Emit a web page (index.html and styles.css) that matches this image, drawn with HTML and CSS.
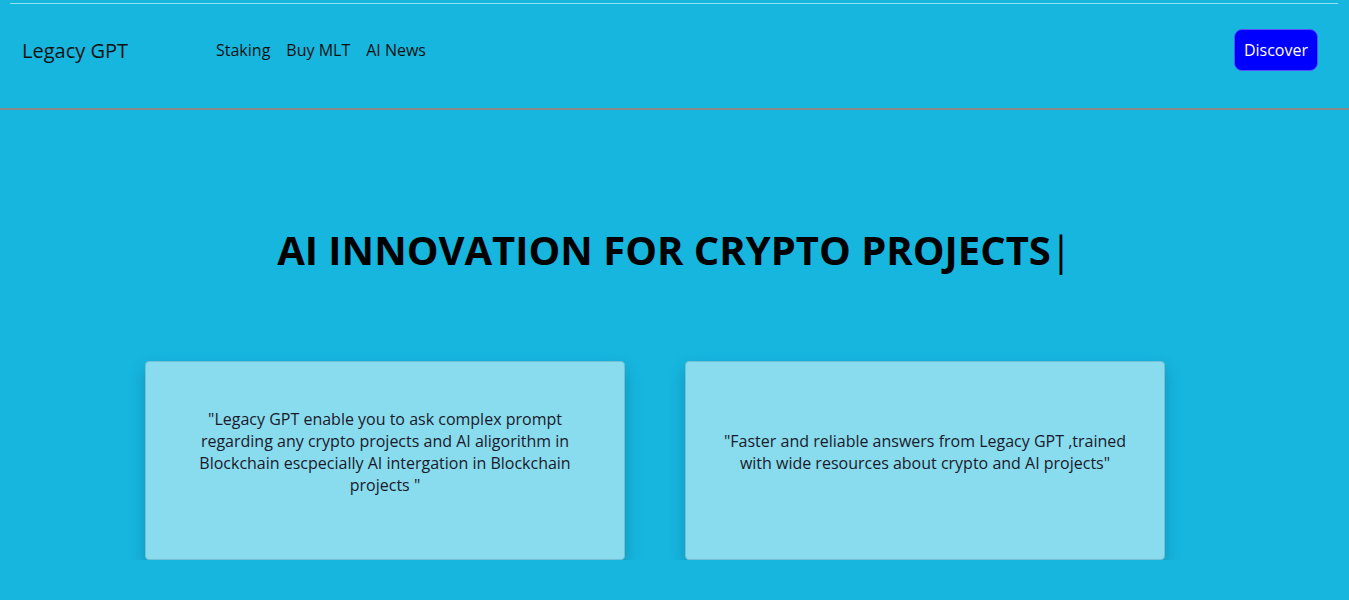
FILE: index.html
```html
<!DOCTYPE html>
<html>
<head>
<meta charset="utf-8">
<link rel="stylesheet" href="styles.css">
</head>
<body>
<header class="header">
  <div class="topline"></div>
  <nav class="nav">
    <div class="brand">Legacy GPT</div>
    <div class="links">
      <a href="#">Staking</a>
      <a href="#">Buy MLT</a>
      <a href="#">AI News</a>
    </div>
    <button class="discover">Discover</button>
  </nav>
</header>
<main class="main">
  <h1 class="title">AI INNOVATION FOR CRYPTO PROJECTS<span class="cursor">|</span></h1>
  <section class="cards">
    <div class="card"><p>"Legacy GPT enable you to ask complex prompt regarding any crypto projects and AI aligorithm in Blockchain escpecially AI intergation in Blockchain projects "</p></div>
    <div class="card"><p>"Faster and reliable answers from Legacy GPT ,trained with wide resources about crypto and AI projects"</p></div>
  </section>
</main>
</body>
</html>
```
FILE: styles.css
```css
html, body {
  margin: 0;
  padding: 0;
  background: #16b6df;
  font-family: "Open Sans", "Noto Sans", sans-serif;
  color: #111;
  overflow: hidden;
}
.header {
  border-bottom: 2px solid #8a8a8a;
  height: 107px;
  box-sizing: border-box;
}
.topline {
  margin: 3px 11px 0 10px;
  height: 1px;
  background: #8fe2f3;
}
.nav {
  display: flex;
  align-items: center;
  height: 92px;
  padding: 0 31px 0 22px;
}
.brand {
  font-size: 20px;
  width: 194px;
}
.links {
  display: flex;
  gap: 16px;
  flex: 1;
}
.links a {
  color: #111;
  text-decoration: none;
  font-size: 16px;
}
.discover {
  background: #0000ff;
  color: #fff;
  border: 1px solid #5a4fff;
  border-radius: 8px;
  font-family: "Open Sans", sans-serif;
  font-size: 16px;
  height: 42px;
  padding: 0 9px;
}
.main {
  padding-top: 115px;
}
.title {
  margin: 0;
  text-align: center;
  font-size: 40px;
  font-weight: 700;
  line-height: 50px;
  color: #000;
  padding-left: 0;
}
.cursor {
  font-weight: 400;
  margin-left: -1px;
}
.cards {
  display: flex;
  gap: 60px;
  margin-top: 86px;
  padding-left: 145px;
}
.card {
  width: 480px;
  height: 199px;
  box-sizing: border-box;
  background: #89dbee;
  border: 1px solid #72bfd3;
  border-radius: 4px;
  box-shadow: 0 8px 16px rgba(0, 60, 90, 0.3);
  display: flex;
  align-items: center;
  justify-content: center;
  padding: 0 30px 18px;
}
.card p {
  margin: 0;
  text-align: center;
  font-size: 16px;
  line-height: 22px;
  color: #1a1a2a;
}
```
